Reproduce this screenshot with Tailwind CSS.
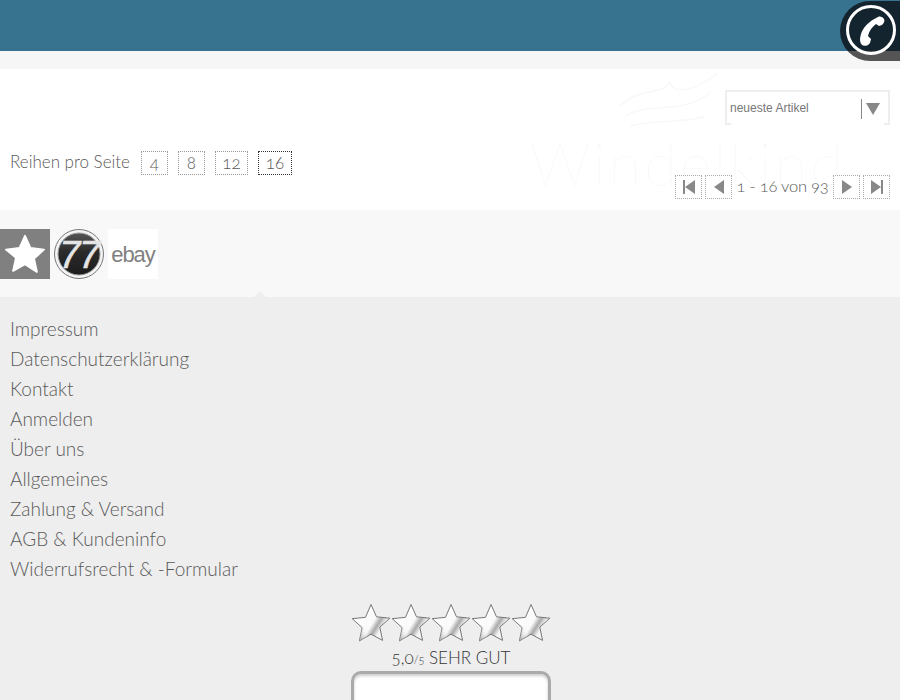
<!DOCTYPE html>
<html lang="de">
<head>
<meta charset="UTF-8">
<title>Windelkind</title>
<script src="https://cdn.jsdelivr.net/npm/@tailwindcss/browser@4"></script>
</head>
<body class="relative h-[700px] overflow-hidden bg-[#eeeeee] font-['Lato','Open_Sans',sans-serif] font-light text-[#5a5a5a] oldstyle-nums">

<!-- phone badge -->
<div class="absolute right-0 top-[1px] h-[60px] w-[60px] rounded-l-[30px] bg-[linear-gradient(#14242e_0,#14242e_50px,#555555_50px)]">
  <div class="absolute left-[6px] top-[4px] h-[50px] w-[50px] rounded-full border-[3px] border-white">
    <svg viewBox="0 0 44 44" class="h-[44px] w-[44px]" fill="#ffffff"><path d="M29 9C31 8 34 9 35 11C36 13 35 15 33 17L30 18L27 16C23 19 20 23 19 28L22 31L21 35C19 38 15 38.500 13 37C11 35 10.500 32 11.500 28C13 20 20 13 29 9Z"/></svg>
  </div>
</div>

<header class="h-[51px] bg-[#37738f]"></header>
<div class="h-[18px] bg-[#f6f6f6]"></div>

<!-- listing toolbar -->
<section class="relative h-[141px] bg-white">
  <!-- faint watermark -->
  <svg viewBox="0 0 120 70" class="absolute left-[610px] top-[2px] h-[70px] w-[120px]" fill="none" stroke="#f8f8f8" stroke-width="1.500">
    <path d="M10 35C30 15 55 25 60 10C62 25 85 20 108 2"/>
    <path d="M15 45C40 30 70 45 100 22"/>
    <path d="M20 55C50 48 80 52 95 45"/>
  </svg>
  <div class="absolute left-[530px] top-[64px] text-[60px] font-thin leading-none tracking-[3px] text-[#f7f7f7]">Windelkind</div>

  <div class="absolute right-[10px] top-[21px] flex h-[35px] w-[165px] items-center justify-between border-2 border-b-0 border-[#eeeeee] pl-[3px] pr-[8px] font-['Liberation_Sans',sans-serif] text-[12px] font-normal text-[#777777]">
    <span class="-mt-[2px]">neueste Artikel</span>
    <span class="flex items-center gap-[4px]">
      <span class="h-[20px] w-px bg-[#888888]"></span>
      <svg viewBox="0 0 14 12" class="h-[12px] w-[14px]" fill="#888888"><path d="M0 0h14L7 12z"/></svg>
    </span>
    <span class="absolute bottom-0 left-0 h-[2px] w-[4px] bg-[#eeeeee]"></span>
    <span class="absolute bottom-0 right-0 h-[2px] w-[4px] bg-[#eeeeee]"></span>
  </div>

  <div class="absolute left-[10px] top-[81px] flex h-[25px] items-center text-[17px] leading-[23px]">
    <span class="-mt-[2px]">Reihen pro Seite</span>
    <span class="ml-[11px] flex h-[24px] w-[27px] items-center justify-center border border-dotted border-[#999999]">4</span>
    <span class="ml-[10px] flex h-[24px] w-[27px] items-center justify-center border border-dotted border-[#999999]">8</span>
    <span class="ml-[10px] flex h-[24px] w-[33px] items-center justify-center border border-dotted border-[#999999]">12</span>
    <span class="ml-[10px] flex h-[24px] w-[34px] items-center justify-center border border-dotted border-[#333333]">16</span>
  </div>

  <div class="absolute right-[10px] top-[105px] flex h-[25px] items-center text-[16.500px] tracking-[-0.200px]">
    <span class="flex h-[24px] w-[27px] items-center justify-center border border-dotted border-[#aaaaaa]">
      <svg viewBox="0 0 14 14" class="h-[14px] w-[14px]" fill="#888888"><path d="M1 0h2v14H1zM13 0v14L3 7z"/></svg>
    </span>
    <span class="ml-[3px] flex h-[24px] w-[27px] items-center justify-center border border-dotted border-[#aaaaaa]">
      <svg viewBox="0 0 14 14" class="h-[14px] w-[14px]" fill="#888888"><path d="M12 0v14L2 7z"/></svg>
    </span>
    <span class="w-[101px] text-center">1 - 16 von 93</span>
    <span class="flex h-[24px] w-[27px] items-center justify-center border border-dotted border-[#aaaaaa]">
      <svg viewBox="0 0 14 14" class="h-[14px] w-[14px]" fill="#888888"><path d="M2 0v14L12 7z"/></svg>
    </span>
    <span class="ml-[3px] flex h-[24px] w-[27px] items-center justify-center border border-dotted border-[#aaaaaa]">
      <svg viewBox="0 0 14 14" class="h-[14px] w-[14px]" fill="#888888"><path d="M1 0v14L11 7zM11 0h2v14h-2z"/></svg>
    </span>
  </div>
</section>

<!-- social / shop links -->
<section class="relative flex h-[87px] items-start gap-[4px] bg-[#f8f8f8] pt-[19px]">
  <div class="flex h-[50px] w-[50px] items-center justify-center bg-[#808080]">
    <svg viewBox="0 0 24 24" class="h-[46px] w-[46px]" fill="#ffffff" stroke="#ffffff" stroke-linejoin="round"><path d="M12 2.500l2.900 6.400 7 .800-5.200 4.700 1.500 6.900L12 17.300l-6.200 3.500 1.500-6.900L2.100 9.700l7-.800z"/></svg>
  </div>
  <svg viewBox="0 0 50 50" class="h-[50px] w-[50px]">
    <defs><linearGradient id="d" x1="0" y1="0" x2="0" y2="1"><stop offset="0" stop-color="#555555"/><stop offset=".45" stop-color="#2a2a2a"/><stop offset="1" stop-color="#1c1c1c"/></linearGradient></defs>
    <circle cx="25" cy="25" r="24.500" fill="#f4f4f4" stroke="#777777"/>
    <circle cx="25" cy="25" r="21" fill="url(#d)" stroke="#999999"/>
    <text x="25" y="39" text-anchor="middle" font-family="Liberation Sans" font-size="38" font-weight="400" font-style="italic" fill="#e4e4e4" stroke="#e4e4e4" stroke-width=".6" letter-spacing="-1.500">77</text>
  </svg>
  <div class="flex h-[50px] w-[50px] items-center justify-center bg-white pt-[1px] font-['Liberation_Sans',sans-serif] text-[22px] font-normal tracking-[-1px] text-[#808080]">ebay</div>
  <svg viewBox="0 0 12 6" class="absolute bottom-0 left-[254px] h-[6px] w-[12px]" fill="#eeeeee"><path d="M0 6L6 0l6 6z"/></svg>
</section>

<!-- footer -->
<footer>
  <nav class="flex flex-col px-[10px] pt-[17px] text-[19px] leading-[30px]">
    <a>Impressum</a>
    <a>Datenschutzerklärung</a>
    <a>Kontakt</a>
    <a>Anmelden</a>
    <a>Über uns</a>
    <a>Allgemeines</a>
    <a>Zahlung &amp; Versand</a>
    <a>AGB &amp; Kundeninfo</a>
    <a>Widerrufsrecht &amp; -Formular</a>
  </nav>

  <div class="mt-[19px] flex flex-col items-center pl-[2px]">
    <div class="flex h-[40px] w-[200px]">
      <svg viewBox="0 0 40 40" class="h-[40px] w-[40px]">
        <defs>
          <linearGradient id="s" x1="0" y1="0" x2="1" y2=".6"><stop offset="0" stop-color="#ffffff"/><stop offset=".62" stop-color="#fafafa"/><stop offset=".74" stop-color="#aaaaaa"/><stop offset=".86" stop-color="#f4f4f4"/></linearGradient>
          <linearGradient id="l" x1="1" y1="0" x2="0" y2="1"><stop offset=".35" stop-color="#f4f4f4" stop-opacity="0"/><stop offset="1" stop-color="#999999"/></linearGradient>
        </defs>
        <path d="M20 1.500l5.500 12.300 13.300 1.400-10 9 2.800 13.200L20 31.200 8.400 37.900l2.800-13.200-10-9 13.300-1.400z" fill="url(#s)" stroke="#777777"/>
        <path d="M20 22L11.200 24.700 8.400 37.900 20 31.200z" fill="url(#l)"/>
      </svg>
      <svg viewBox="0 0 40 40" class="h-[40px] w-[40px]"><path d="M20 1.500l5.500 12.300 13.300 1.400-10 9 2.800 13.200L20 31.200 8.400 37.900l2.800-13.200-10-9 13.300-1.400z" fill="url(#s)" stroke="#777777"/><path d="M20 22L11.200 24.700 8.400 37.900 20 31.200z" fill="url(#l)"/></svg>
      <svg viewBox="0 0 40 40" class="h-[40px] w-[40px]"><path d="M20 1.500l5.500 12.300 13.300 1.400-10 9 2.800 13.200L20 31.200 8.400 37.900l2.800-13.200-10-9 13.300-1.400z" fill="url(#s)" stroke="#777777"/><path d="M20 22L11.200 24.700 8.400 37.900 20 31.200z" fill="url(#l)"/></svg>
      <svg viewBox="0 0 40 40" class="h-[40px] w-[40px]"><path d="M20 1.500l5.500 12.300 13.300 1.400-10 9 2.800 13.200L20 31.200 8.400 37.900l2.800-13.200-10-9 13.300-1.400z" fill="url(#s)" stroke="#777777"/><path d="M20 22L11.200 24.700 8.400 37.900 20 31.200z" fill="url(#l)"/></svg>
      <svg viewBox="0 0 40 40" class="h-[40px] w-[40px]"><path d="M20 1.500l5.500 12.300 13.300 1.400-10 9 2.800 13.200L20 31.200 8.400 37.900l2.800-13.200-10-9 13.300-1.400z" fill="url(#s)" stroke="#777777"/><path d="M20 22L11.200 24.700 8.400 37.900 20 31.200z" fill="url(#l)"/></svg>
    </div>
    <p class="mt-[4px] text-[17px] font-light leading-[22px] text-[#333333]">5,0<span class="text-[11px]">/5</span> SEHR GUT</p>
    <div class="mt-0 h-[60px] w-[200px] rounded-t-[10px] border-x-[3px] border-t-[3px] border-[#aaaaaa] bg-white shadow-[inset_0_2px_3px_#cccccc]"></div>
  </div>
</footer>
</body>
</html>
